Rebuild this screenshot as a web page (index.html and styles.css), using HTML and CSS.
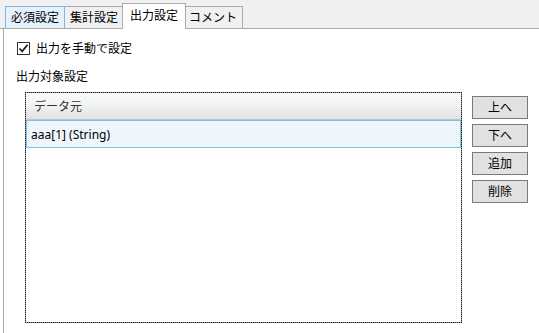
FILE: index.html
```html
<!DOCTYPE html>
<html lang="ja">
<head>
<meta charset="utf-8">
<link rel="stylesheet" href="styles.css">
</head>
<body>
<div class="tabstrip">
  <div class="tab tab-hover">必須設定</div>
  <div class="tab">集計設定</div>
  <div class="tab tab-active">出力設定</div>
  <div class="tab">コメント</div>
</div>
<div class="panel">
  <label class="check-row">
    <span class="checkbox">
      <svg width="11" height="11" viewBox="0 0 11 11"><path d="M1.5 5.5 L4.2 8.3 L9.5 1.8" fill="none" stroke="#222" stroke-width="1.8"/></svg>
    </span>
    <span class="check-text">出力を手動で設定</span>
  </label>
  <div class="section-label">出力対象設定</div>
  <div class="editor">
    <div class="grid">
      <div class="grid-header">データ元</div>
      <div class="grid-row">aaa[1] (String)</div>
    </div>
    <div class="buttons">
      <div class="btn">上へ</div>
      <div class="btn">下へ</div>
      <div class="btn">追加</div>
      <div class="btn">削除</div>
    </div>
  </div>
</div>
</body>
</html>
```

FILE: styles.css
```css
html, body {
  margin: 0;
  padding: 0;
  background: #ffffff;
  font-family: "Noto Sans", "Noto Sans CJK JP", sans-serif;
  font-size: 12px;
  color: #000;
  overflow: hidden;
}

.tabstrip {
  display: flex;
  align-items: flex-end;
  height: 28px;
  padding-left: 5px;
  background: #f0f0f0;
  border-bottom: 1px solid #acacac;
}

.tab {
  box-sizing: border-box;
  width: 60px;
  height: 22px;
  border: 1px solid #acacac;
  border-bottom: none;
  margin-left: -1px;
  background: #f0f0f0;
  display: flex;
  align-items: center;
  justify-content: center;
  line-height: 14px;
  padding-top: 1px;
}

.tab:first-child {
  margin-left: 0;
}

.tab-hover {
  background: #e5f1fb;
  border-color: #7eb4ea;
  position: relative;
  z-index: 1;
}

.tab-active {
  width: 64px;
  height: 26px;
  margin-left: -2px;
  margin-right: -2px;
  margin-bottom: -1px;
  background: #ffffff;
  position: relative;
  z-index: 2;
  padding-top: 0;
  padding-bottom: 2px;
}

.panel {
  margin-left: 3px;
  border-left: 1px solid #acacac;
  height: 304px;
  padding-left: 12px;
  padding-top: 13px;
  box-sizing: border-box;
}

.check-row {
  display: flex;
  align-items: center;
  height: 13px;
  margin-left: 1px;
}

.checkbox {
  box-sizing: border-box;
  width: 13px;
  height: 13px;
  border: 1px solid #333333;
  background: #ffffff;
  display: flex;
  align-items: center;
  justify-content: center;
}

.checkbox svg {
  display: block;
}

.check-text {
  margin-left: 6px;
  line-height: 14px;
}

.section-label {
  margin-top: 15px;
  line-height: 14px;
}

.editor {
  display: flex;
  align-items: flex-start;
  margin-top: 8px;
  margin-left: 9px;
}

.grid {
  box-sizing: border-box;
  width: 437px;
  height: 231px;
  border: 1px dotted #1f2b38;
  background: linear-gradient(#ffffff, #ffffff) padding-box, #7d8894 border-box;
}

.grid-header {
  box-sizing: border-box;
  height: 27px;
  padding-left: 8px;
  display: flex;
  align-items: center;
  color: #333;
  background: linear-gradient(#fafafa, #f1f2f2 50%, #dfe1e2);
  border-bottom: 1px solid #b9c6cc;
}

.grid-row {
  box-sizing: border-box;
  height: 28px;
  border: 1px solid #7ec3da;
  background: #eef5fb;
  padding-left: 4px;
  display: flex;
  align-items: center;
}

.buttons {
  display: flex;
  flex-direction: column;
  gap: 5px;
  margin-left: 10px;
  margin-top: 4px;
}

.btn {
  box-sizing: border-box;
  width: 56px;
  height: 23px;
  border: 1px solid #7a7a7a;
  background: #e1e1e1;
  display: flex;
  align-items: center;
  justify-content: center;
  line-height: 14px;
}
```
